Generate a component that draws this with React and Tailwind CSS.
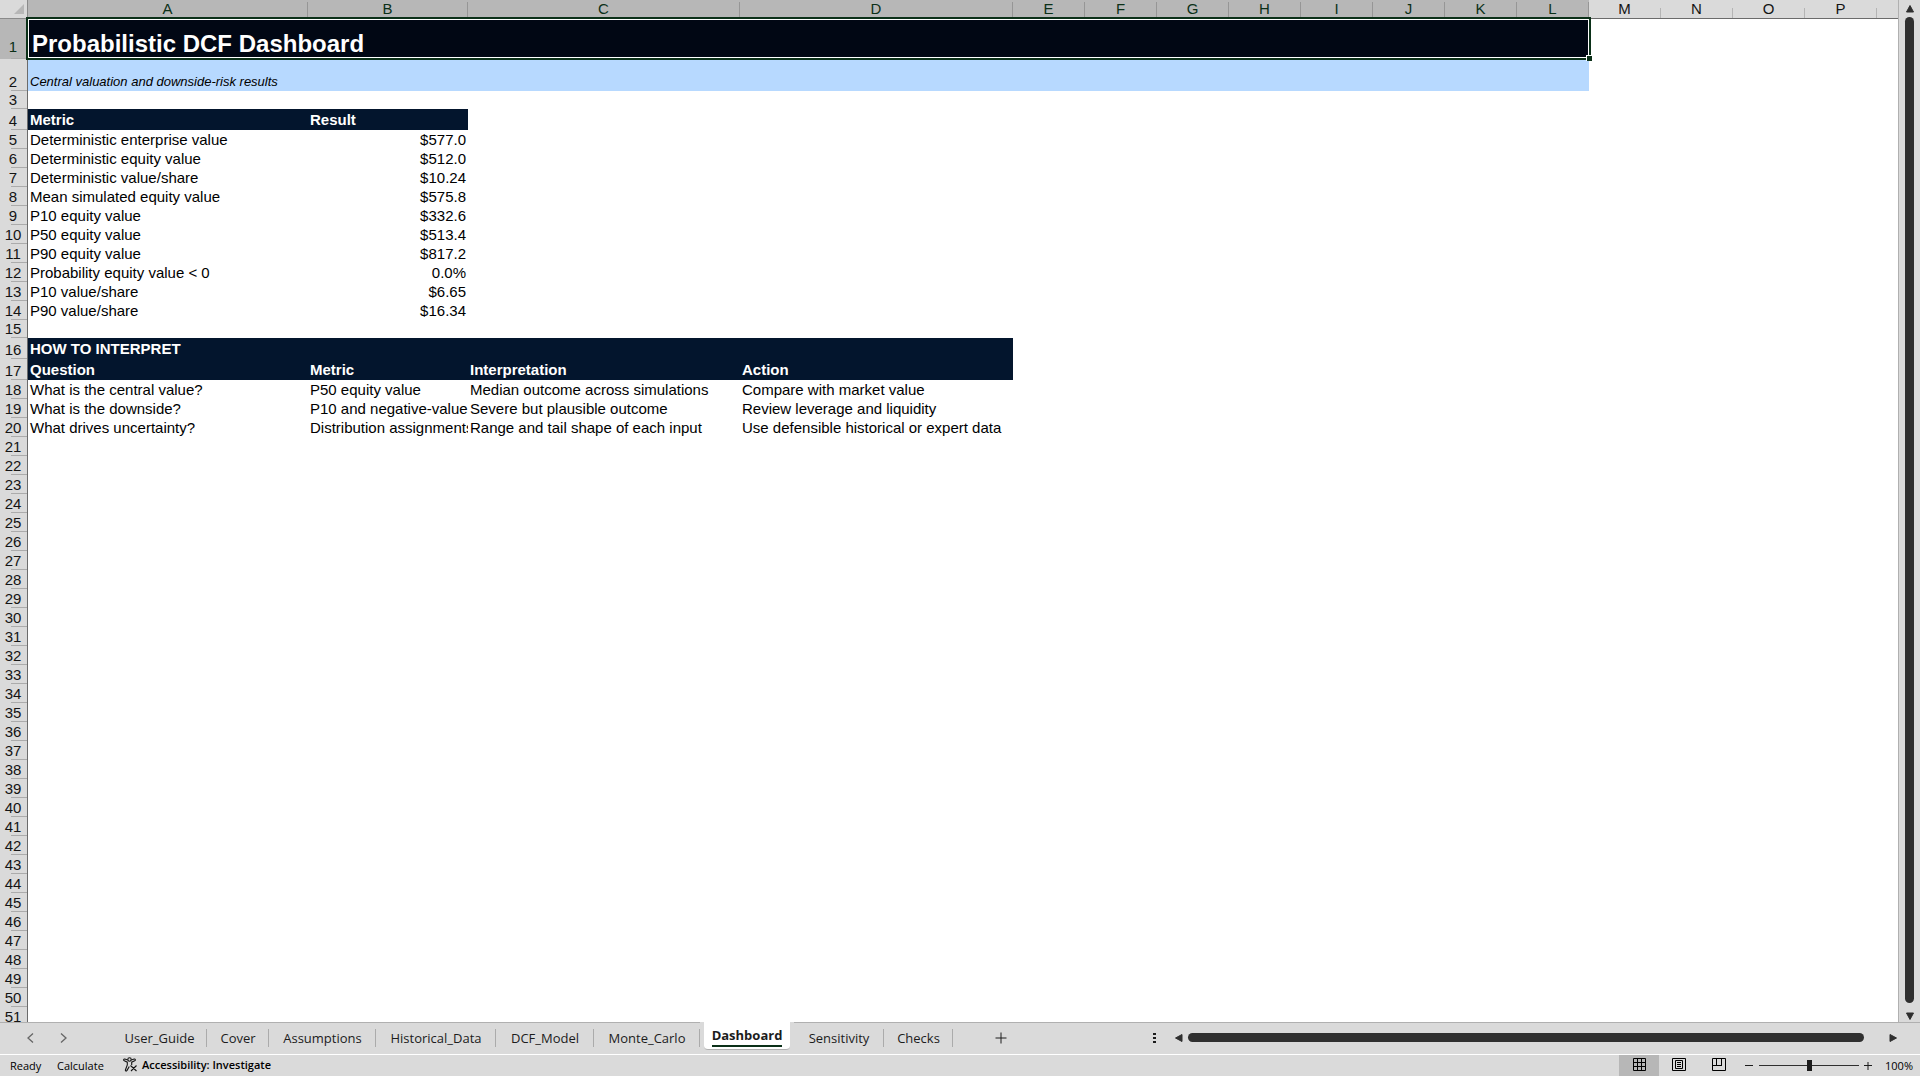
import { useState } from 'react'
import clsx from 'clsx'

const COLUMNS = [
  { name: 'A', width: 'w-[280px]' },
  { name: 'B', width: 'w-[160px]' },
  { name: 'C', width: 'w-[272px]' },
  { name: 'D', width: 'w-[273px]' },
  ...'EFGHIJKLMNOP'.split('').map((name) => ({ name, width: 'w-[72px]' }))
]

const METRICS = [
  ['Deterministic enterprise value', '$577.0'],
  ['Deterministic equity value', '$512.0'],
  ['Deterministic value/share', '$10.24'],
  ['Mean simulated equity value', '$575.8'],
  ['P10 equity value', '$332.6'],
  ['P50 equity value', '$513.4'],
  ['P90 equity value', '$817.2'],
  ['Probability equity value < 0', '0.0%'],
  ['P10 value/share', '$6.65'],
  ['P90 value/share', '$16.34']
]

const QUESTIONS = [
  ['What is the central value?', 'P50 equity value', 'Median outcome across simulations', 'Compare with market value'],
  ['What is the downside?', 'P10 and negative-value p', 'Severe but plausible outcome', 'Review leverage and liquidity'],
  ['What drives uncertainty?', 'Distribution assignments', 'Range and tail shape of each input', 'Use defensible historical or expert data']
]

const SHEETS = [
  { name: 'User_Guide', width: 'w-[95px]' },
  { name: 'Cover', width: 'w-[62px]' },
  { name: 'Assumptions', width: 'w-[107px]' },
  { name: 'Historical_Data', width: 'w-[120px]' },
  { name: 'DCF_Model', width: 'w-[98px]' },
  { name: 'Monte_Carlo', width: 'w-[106px]' },
  { name: 'Dashboard', width: 'w-[94px]' },
  { name: 'Sensitivity', width: 'w-[90px]' },
  { name: 'Checks', width: 'w-[69px]' }
]

const EMPTY_ROWS = Array.from({ length: 31 }, (_, i) => i + 21)

function Row({ number, height = 'h-[19px]', selected = false, children }) {
  return (
    <tr className={height}>
      <th
        scope="row"
        className={clsx(
          'relative border-r border-[#6b6b6b] p-0 pr-px text-center align-bottom font-normal leading-[18px]',
          'after:absolute after:bottom-0 after:right-0 after:h-px after:w-4 after:bg-[#ababab]',
          selected ? 'bg-[#b7b7b7] pb-[3px] text-[#0b3018]' : 'bg-[#dadada] text-[#141414]'
        )}
      >
        {number}
      </th>
      {children}
    </tr>
  )
}

function Cell({ className, ...props }) {
  return (
    <td
      className={clsx('overflow-hidden whitespace-nowrap px-[2px] py-0 align-bottom', className)}
      {...props}
    />
  )
}

function HeadCell({ children, ...props }) {
  return (
    <Cell className="bg-[#03152d] pb-px font-bold text-white" {...props}>
      {children}
    </Cell>
  )
}

function Arrow({ points, label, className }) {
  return (
    <button type="button" aria-label={label} className={className}>
      <svg width="10" height="10" viewBox="0 0 10 10" fill="#2f2f2f" stroke="#2f2f2f" strokeLinejoin="round">
        <polygon points={points} />
      </svg>
    </button>
  )
}

function Sheet() {
  return (
    <table className="w-full min-w-[1877px] table-fixed border-separate border-spacing-0 text-[15px] leading-[18px] text-black">
      <colgroup>
        <col className="w-[28px]" />
        {COLUMNS.map((col) => (
          <col key={col.name} className={col.width} />
        ))}
        <col />
      </colgroup>
      <thead>
        <tr className="h-[19px]">
          <td className="border-b border-r border-[#8a8a8a] bg-[#dadada] p-0">
            <svg className="ml-auto mr-[3px] block" width="10" height="10" viewBox="0 0 10 10" fill="#b7b7b7">
              <path d="M10 0v10H0z" />
            </svg>
          </td>
          {COLUMNS.map((col) => (
            <th
              key={col.name}
              scope="col"
              className={clsx(
                'relative border-b border-[#6b6b6b] p-0 pr-px text-center font-normal',
                'after:absolute after:bottom-0 after:right-0 after:w-px',
                col.name <= 'L'
                  ? 'bg-[#b7b7b7] text-[#0b3018] after:h-4 after:bg-[#969696]'
                  : 'bg-[#dadada] text-[#141414] after:h-[10px] after:bg-[#b4b4b4]'
              )}
            >
              {col.name}
            </th>
          ))}
          <td className="border-b border-[#6b6b6b] bg-[#dadada] p-0" />
        </tr>
      </thead>
      <tbody>
        <Row number={1} height="h-[40px]" selected>
          <td
            colSpan={12}
            className="relative bg-[#010714] px-1 pb-px pt-0 align-bottom text-2xl leading-[28px] font-bold text-white"
          >
            Probabilistic DCF Dashboard
            {/* selection outline and fill handle */}
            <div className="pointer-events-none absolute -bottom-px -left-[2px] -right-[2px] -top-[2px] z-10 border-2 border-[#0b3018]">
              <div className="absolute inset-0 border border-white" />
              <span className="absolute -bottom-[3px] -right-[3px] size-[6px] border-l border-t border-white bg-[#0b3018]" />
            </div>
          </td>
        </Row>
        <Row number={2} height="h-[32px]">
          <Cell colSpan={12} className="bg-[#b7d9ff] text-[13px] italic">
            Central valuation and downside-risk results
          </Cell>
        </Row>
        <Row number={3} height="h-[18px]" />
        <Row number={4} height="h-[21px]">
          <HeadCell>Metric</HeadCell>
          <HeadCell>Result</HeadCell>
        </Row>
        {METRICS.map(([metric, result], i) => (
          <Row key={metric} number={i + 5}>
            <Cell>{metric}</Cell>
            <Cell className="text-right">{result}</Cell>
          </Row>
        ))}
        <Row number={15} height="h-[18px]" />
        <Row number={16} height="h-[21px]">
          <HeadCell colSpan={4}>HOW TO INTERPRET</HeadCell>
        </Row>
        <Row number={17} height="h-[21px]">
          <HeadCell>Question</HeadCell>
          <HeadCell>Metric</HeadCell>
          <HeadCell>Interpretation</HeadCell>
          <HeadCell>Action</HeadCell>
        </Row>
        {QUESTIONS.map((cells, i) => (
          <Row key={cells[0]} number={i + 18}>
            {cells.map((text) => (
              <Cell key={text}>{text}</Cell>
            ))}
          </Row>
        ))}
        {EMPTY_ROWS.map((number) => (
          <Row key={number} number={number} />
        ))}
      </tbody>
    </table>
  )
}

function SheetTabs() {
  const [active, setActive] = useState('Dashboard')

  return (
    <nav className="flex h-[32px] shrink-0 bg-[#dadada] font-['Open_Sans',sans-serif] text-[13px] text-[#1c1c1c]">
      <div className="flex w-[112px] items-center gap-[24px] border-t border-[#b0b0b0] pb-[2px] pl-[26px]">
        <button type="button" aria-label="Previous sheet">
          <svg width="9" height="10" viewBox="0 0 9 10" fill="none" stroke="#666" strokeWidth="1.3">
            <path d="M7 .5 2 5l5 4.500" />
          </svg>
        </button>
        <button type="button" aria-label="Next sheet">
          <svg width="9" height="10" viewBox="0 0 9 10" fill="none" stroke="#666" strokeWidth="1.3">
            <path d="m2 .5 5 4.500-5 4.500" />
          </svg>
        </button>
      </div>
      {SHEETS.map(({ name, width }) =>
        name === active ? (
          <div key={name} className={clsx('flex px-1', width)}>
            <button
              type="button"
              className="flex h-[28px] w-full items-start justify-center rounded-b border-b border-[#b0b0b0] bg-white pt-[3px] font-bold"
            >
              <span className="border-b-2 border-[#0b3018] leading-5">{name}</span>
            </button>
          </div>
        ) : (
          <button
            key={name}
            type="button"
            onClick={() => setActive(name)}
            className={clsx(
              'relative border-t border-[#b0b0b0] pb-[2px] text-center leading-[28px]',
              'after:absolute after:right-0 after:top-[6px] after:h-[18px] after:w-px after:bg-[#ababab]',
              width
            )}
          >
            {name}
          </button>
        )
      )}
      <div className="flex min-w-0 flex-1 items-center border-t border-[#b0b0b0] pb-[2px]">
        <button type="button" aria-label="New sheet" className="ml-[42px]">
          <svg width="12" height="12" viewBox="0 0 12 12" stroke="#1c1c1c">
            <path d="M6 .5v11M.5 6h11" />
          </svg>
        </button>
        <div className="ml-auto flex w-[768px] min-w-0 items-center pr-[22px]">
          <svg className="mr-[18px] mt-[2px] shrink-0" width="4" height="11" fill="#1c1c1c">
            <path d="M1 0h3v2H1zM1 4h3v2H1zM1 8h3v2H1z" />
          </svg>
          <Arrow label="Scroll left" points="1.500,5 8,1.500 8,8.500" className="shrink-0" />
          <div className="ml-1 mr-[24px] h-[9px] flex-1 rounded-full bg-[#2f2f2f]" />
          <Arrow label="Scroll right" points="8.500,5 2,1.500 2,8.500" className="shrink-0" />
        </div>
      </div>
    </nav>
  )
}

function StatusBar() {
  const [zoom, setZoom] = useState(100)

  return (
    <footer className="flex h-[22px] shrink-0 items-center border-t border-white bg-[#dadada] pl-[10px] font-['Open_Sans',sans-serif] text-[11px] leading-[20px] text-black">
      <span className="w-[47px]">Ready</span>
      <span className="w-[66px]">Calculate</span>
      <button type="button" className="flex items-center gap-1 pb-[2px] font-semibold">
        <svg width="15" height="15" viewBox="0 0 15 15" fill="none" stroke="#141414" strokeWidth="1.100">
          <circle cx="6.500" cy="2.500" r="1.700" />
          <path d="M4.800 3 1.800 2C.6 1.800.2 3.300 1.300 3.800L4.300 5.200V8l-1.900 5c-.2 1 1 1.500 1.500.6L6.300 9.500M8.200 3l3-1c1.200-.2 1.600 1.300.5 1.800L8.700 5.200V8M7.500 8.500l6 5.500M13.500 8.500l-5.500 5.500" />
        </svg>
        Accessibility: Investigate
      </button>
      <div className="ml-auto flex h-full items-center">
        <button type="button" aria-label="Normal view" className="flex h-full w-10 items-center justify-center bg-[#b7b7b7] pb-[2px]">
          <svg width="13" height="13" viewBox="0 0 13 13" fill="none" stroke="#000">
            <path d="M.5.5h12v12H.5zM4.500 0v13M8.500 0v13M0 4.500h13M0 8.500h13" />
          </svg>
        </button>
        <button type="button" aria-label="Page layout" className="flex h-full w-10 items-center justify-center pb-[2px]">
          <svg width="14" height="13" viewBox="0 0 14 13" fill="none" stroke="#000">
            <path d="M.5.5h13v12H.5zM3.500 2.500h7v8h-7zM5 4.500h4M5 6.500h4M5 8.500h4" />
          </svg>
        </button>
        <button type="button" aria-label="Page break preview" className="flex h-full w-10 items-center justify-center pb-[2px]">
          <svg width="14" height="13" viewBox="0 0 14 13" fill="none" stroke="#000">
            <path d="M.5.5h13v12H.5zM4.500 0v7.500M9.500 0v7.500M0 7.500h10" />
          </svg>
        </button>
        <button type="button" aria-label="Zoom out" className="ml-[6px]">
          <svg width="8" height="8" viewBox="0 0 8 8" stroke="#1c1c1c">
            <path d="M0 3.500h8" />
          </svg>
        </button>
        <input
          type="range"
          aria-label="Zoom"
          min="0"
          max="200"
          value={zoom}
          onChange={(e) => setZoom(Number(e.target.value))}
          className="ml-[6px] h-[11px] w-[100px] appearance-none bg-[linear-gradient(#2f2f2f,#2f2f2f)] bg-[length:100%_1px] bg-center bg-no-repeat [&::-webkit-slider-thumb]:h-[11px] [&::-webkit-slider-thumb]:w-[5px] [&::-webkit-slider-thumb]:appearance-none [&::-webkit-slider-thumb]:bg-[#1c1c1c]"
        />
        <button type="button" aria-label="Zoom in" className="ml-[5px]">
          <svg width="8" height="8" viewBox="0 0 8 8" stroke="#1c1c1c">
            <path d="M0 3.500h8M4 0v8" />
          </svg>
        </button>
        <span className="w-[48px] pr-[7px] text-right">{zoom}%</span>
      </div>
    </footer>
  )
}

export default function App() {
  return (
    <div className="flex h-screen flex-col overflow-hidden bg-[#dadada] font-['Liberation_Sans',Arial,sans-serif]">
      <main className="flex min-h-0 flex-1">
        <div className="min-w-0 flex-1 overflow-hidden bg-white">
          <Sheet />
        </div>
        <div className="flex w-[22px] flex-col items-center border-l border-[#b0b0b0] pb-px pt-1">
          <Arrow label="Scroll up" points="5,1.500 1.500,8 8.500,8" />
          <div className="mb-[8px] mt-[3px] w-[9px] flex-1 rounded-full bg-[#2f2f2f]" />
          <Arrow label="Scroll down" points="5,8.500 1.500,2 8.500,2" />
        </div>
      </main>
      <SheetTabs />
      <StatusBar />
    </div>
  )
}
